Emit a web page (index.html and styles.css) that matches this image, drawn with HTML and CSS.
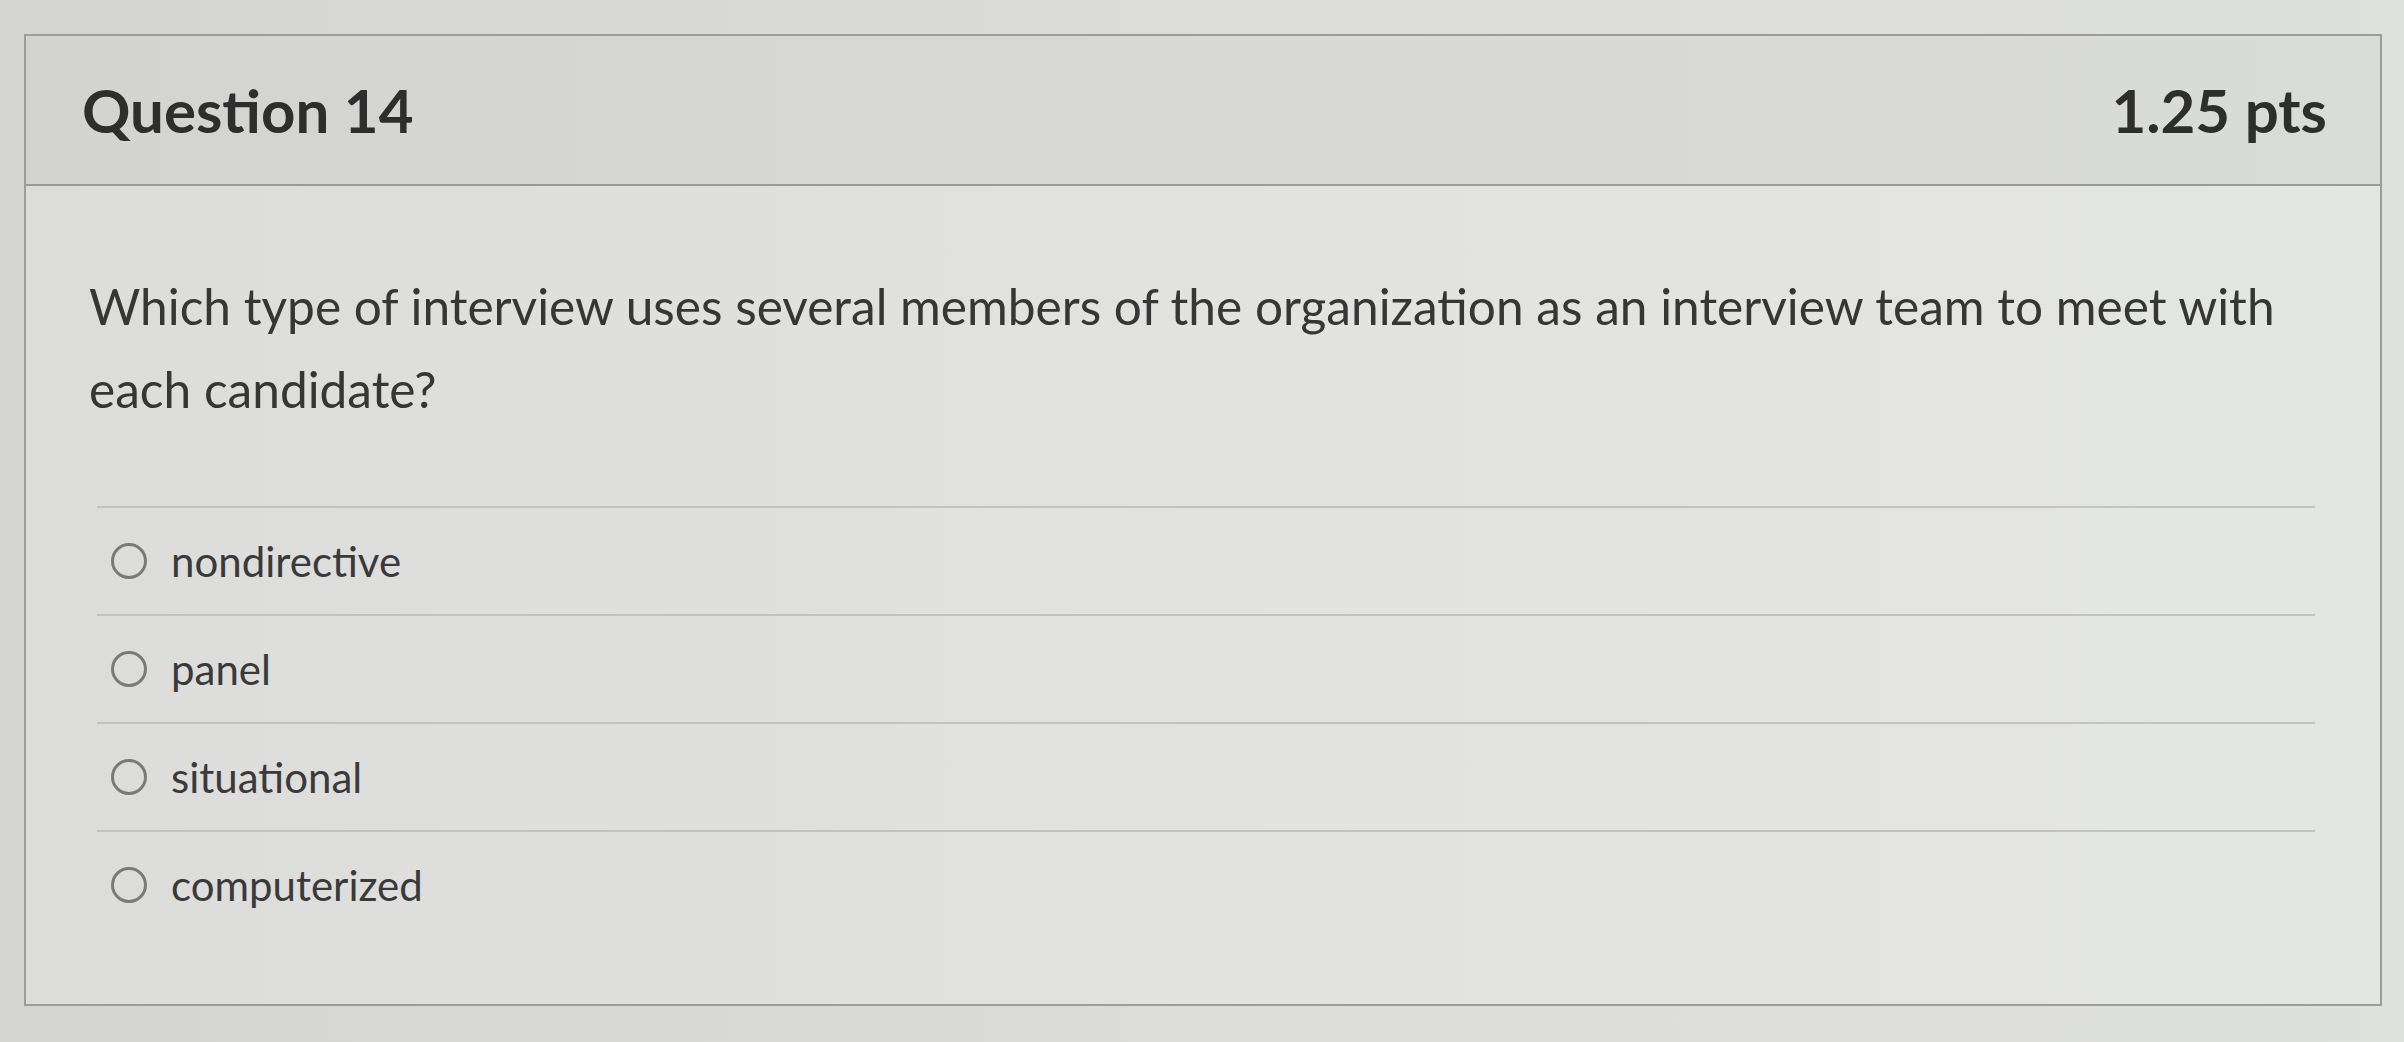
FILE: index.html
```html
<!DOCTYPE html>
<html lang="en">
<head>
<meta charset="utf-8">
<title>Question 14</title>
<link rel="stylesheet" href="styles.css">
</head>
<body>
<div class="page">
  <div class="question-card">
    <div class="question-header">
      <span class="question-title">Question 14</span>
      <span class="question-points">1.25 pts</span>
    </div>
    <div class="question-body">
      <p class="question-text">Which type of interview uses several members of the organization as an interview team to meet with each candidate?</p>
      <div class="answers">
        <label class="answer"><span class="radio"></span><span class="answer-text">nondirective</span></label>
        <label class="answer"><span class="radio"></span><span class="answer-text">panel</span></label>
        <label class="answer"><span class="radio"></span><span class="answer-text">situational</span></label>
        <label class="answer"><span class="radio"></span><span class="answer-text">computerized</span></label>
      </div>
    </div>
  </div>
</div>
</body>
</html>
```

FILE: styles.css
```css
html, body {
  margin: 0;
  padding: 0;
}
body {
  width: 2404px;
  height: 1042px;
  overflow: hidden;
  background: linear-gradient(90deg, #d4d4d2 0%, #dcdcda 50%, #dfe1df 100%);
  font-family: Lato, "Open Sans", sans-serif;
  color: #333;
}
.page {
  padding: 34px 24px 0 24px;
}
.question-card {
  width: 2354px;
  height: 968px;
  border: 2px solid #9c9c9c;
  background: linear-gradient(90deg, #dcdcda 0%, #e2e2e0 50%, #e4e6e4 100%);
  display: flex;
  flex-direction: column;
}
.question-header {
  height: 148px;
  border-bottom: 2px solid #9a9a9a;
  background: linear-gradient(90deg, #d3d3d1 0%, #d8d8d6 50%, #dadcda 100%);
  display: flex;
  align-items: center;
  justify-content: space-between;
  padding: 0 53px 0 56px;
}
.question-title,
.question-points {
  font-size: 60px;
  font-weight: 700;
  color: #2e2e2e;
}
.question-body {
  padding: 79px 65px 0 63px;
}
.question-text {
  margin: 0;
  font-size: 49.6px;
  line-height: 83px;
  color: #363636;
}
.answers {
  margin-top: 75px;
  margin-left: 8px;
}
.answer {
  display: flex;
  align-items: center;
  height: 106px;
  border-top: 2px solid #c2c2c0;
}
.radio {
  width: 30px;
  height: 30px;
  border: 3px solid #7a7a7a;
  border-radius: 50%;
  margin-left: 14px;
  margin-right: 24px;
  flex: none;
}
.answer-text {
  font-size: 42px;
  color: #3a3a3a;
}
```
